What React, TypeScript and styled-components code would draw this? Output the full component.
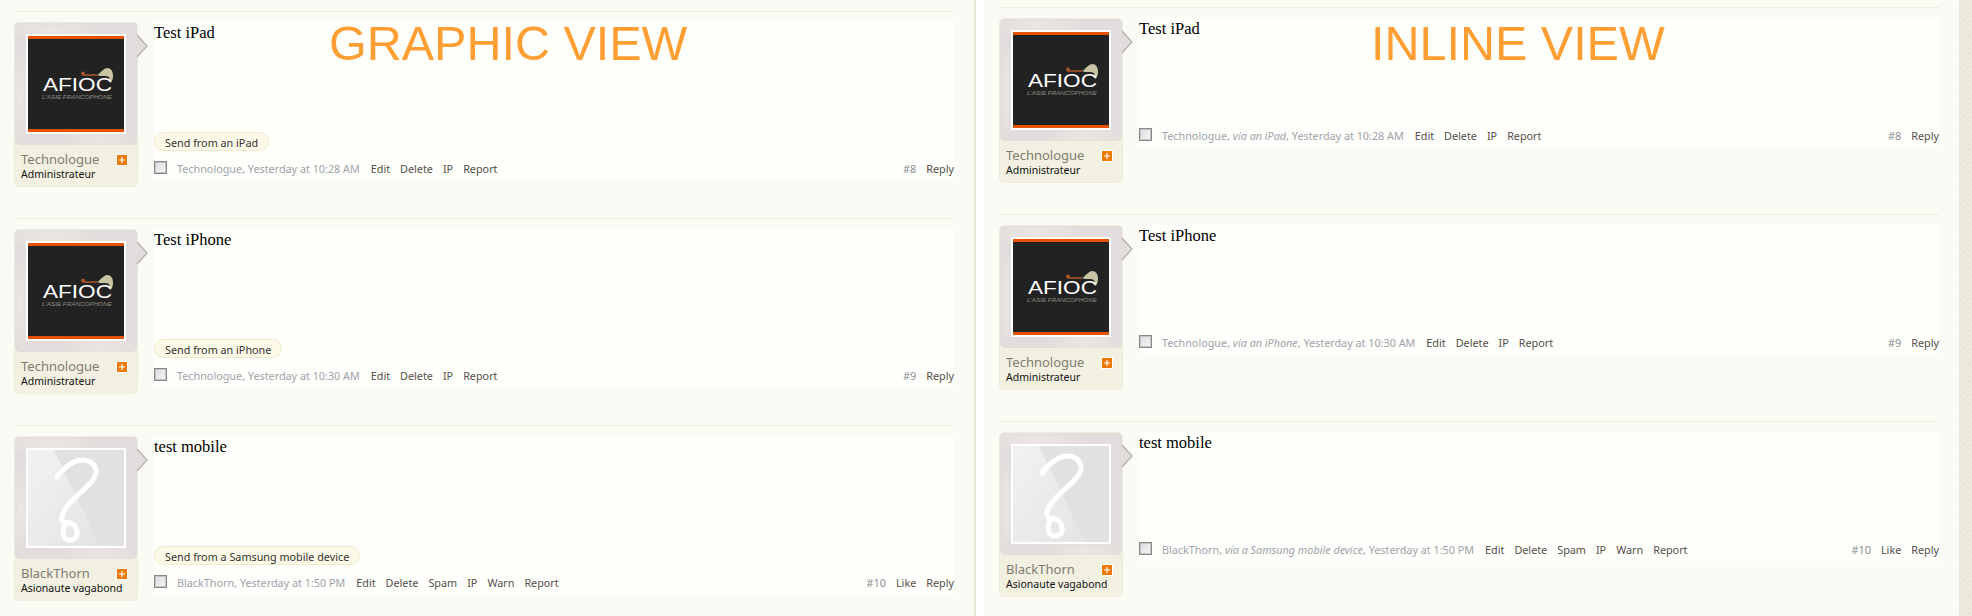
import styled, { createGlobalStyle } from "styled-components";

type PostData = {
    id: number;
    title: string;
    author: string;
    role: string;
    device: string;
    time: string;
    avatar: "afioc" | "unknown";
    links: string[];
    rightLinks: string[];
};

const POSTS: PostData[] = [
    {
        id: 8,
        title: "Test iPad",
        author: "Technologue",
        role: "Administrateur",
        device: "an iPad",
        time: "Yesterday at 10:28 AM",
        avatar: "afioc",
        links: ["Edit", "Delete", "IP", "Report"],
        rightLinks: ["Reply"],
    },
    {
        id: 9,
        title: "Test iPhone",
        author: "Technologue",
        role: "Administrateur",
        device: "an iPhone",
        time: "Yesterday at 10:30 AM",
        avatar: "afioc",
        links: ["Edit", "Delete", "IP", "Report"],
        rightLinks: ["Reply"],
    },
    {
        id: 10,
        title: "test mobile",
        author: "BlackThorn",
        role: "Asionaute vagabond",
        device: "a Samsung mobile device",
        time: "Yesterday at 1:50 PM",
        avatar: "unknown",
        links: ["Edit", "Delete", "Spam", "IP", "Warn", "Report"],
        rightLinks: ["Like", "Reply"],
    },
];

const GlobalStyle = createGlobalStyle`
    html, body {
        margin: 0;
        padding: 0;
        background: #fbfbf5;
    }
`;

const Page = styled.div`
    display: flex;
    width: 1972px;
    height: 616px;
    overflow: hidden;
    font-family: "Noto Sans", sans-serif;
    background: #fbfbf5;
`;

const Panel = styled.section<{ $top: number; $left: number; $width: number }>`
    position: relative;
    box-sizing: border-box;
    width: ${(p) => p.$width}px;
    padding: ${(p) => p.$top}px 20px 0 ${(p) => p.$left}px;
    flex-shrink: 0;
`;

const Gutter = styled.div`
    box-sizing: border-box;
    width: 10px;
    flex-shrink: 0;
    background: #fff;
    border-left: 2px solid #ebe8d8;
`;

const EdgeStripe = styled.div`
    flex: 1;
    background: repeating-linear-gradient(45deg, #e9e6d6 0 2px, #eeebdd 2px 4px);
`;

const ViewLabel = styled.h2<{ $left: number; $top: number }>`
    position: absolute;
    left: ${(p) => p.$left}px;
    top: ${(p) => p.$top}px;
    margin: 0;
    font-family: "Liberation Sans", Arial, sans-serif;
    font-size: 48.5px;
    font-weight: 400;
    line-height: 56px;
    color: #ff9f33;
    white-space: nowrap;
`;

const PostRow = styled.article`
    display: flex;
    box-sizing: border-box;
    height: 207px;
    padding-top: 10px;
    border-top: 1px solid #ecedda;
`;

const UserCard = styled.div`
    position: relative;
    display: flex;
    flex-direction: column;
    box-sizing: border-box;
    width: 124px;
    height: 165px;
    margin-right: 16px;
    flex-shrink: 0;
    border: 1px solid #efecdc;
    border-radius: 5px;
    background: linear-gradient(#edebd8, #f3f1e2);
`;

const AvatarArea = styled.div`
    box-sizing: border-box;
    height: 122px;
    padding: 11px;
    border-radius: 4px 4px 5px 5px;
    background:
        radial-gradient(ellipse 50px 12px at 30% 6%, #ebe6e4, transparent),
        radial-gradient(ellipse 40px 10px at 70% 96%, #ebe6e4, transparent),
        radial-gradient(ellipse 9px 50px at 5% 60%, #ebe6e4, transparent),
        #e3dcdc;
`;

const AvatarFrame = styled.div`
    box-sizing: border-box;
    width: 100px;
    height: 100px;
    border: 2px solid #fff;
    background: #fff;
`;

const ArrowMark = styled.svg`
    position: absolute;
    top: 11px;
    left: 121px;
    width: 12px;
    height: 24px;
`;

const UserInfo = styled.div`
    position: relative;
    padding: 6px 6px 0;
`;

const UserName = styled.div`
    font-size: 13px;
    line-height: 16px;
    color: #7f7d72;
`;

const UserRole = styled.div`
    font-size: 10.5px;
    line-height: 14px;
    color: #111;
`;

const PlusBadge = styled.svg`
    position: absolute;
    top: 9px;
    right: 9px;
    width: 12px;
    height: 12px;
`;

const Message = styled.div<{ $inline: boolean }>`
    display: flex;
    flex: 1;
    flex-direction: column;
    box-sizing: border-box;
    height: ${(p) => (p.$inline ? 129 : 158)}px;
    padding-top: 2px;
    background: #fefefb;
`;

const Title = styled.div`
    font-family: "Liberation Serif", "Times New Roman", serif;
    font-size: 16.5px;
    line-height: 18px;
    color: #000;
`;

const DevicePill = styled.span`
    align-self: flex-start;
    box-sizing: border-box;
    height: 19px;
    margin-top: auto;
    padding: 0 10px;
    border: 1px solid #efeacb;
    border-radius: 10px;
    background: #fdf9e9;
    font-size: 10.8px;
    line-height: 19px;
    color: #333;
`;

const Actions = styled.div<{ $inline: boolean }>`
    display: flex;
    align-items: center;
    height: 13px;
    margin-top: ${(p) => (p.$inline ? "auto" : "10px")};
    margin-bottom: 6px;
    font-size: 10.8px;
    line-height: 13px;
    white-space: nowrap;
`;

const CheckBox = styled.span`
    box-sizing: border-box;
    width: 13px;
    height: 13px;
    margin-right: 10px;
    border: 1px solid #888;
    box-shadow: inset 0 0 0 1px #c4c4c4;
    background: linear-gradient(135deg, #dcdce2, #f7f7f7);
`;

const Meta = styled.span`
    margin-right: 11px;
    padding-top: 1px;
    color: #9fa3aa;
`;

const Device = styled.em`
    font-style: italic;
`;

const LinkGroup = styled.div<{ $end?: boolean }>`
    display: flex;
    gap: 10px;
    padding-top: 1px;
    margin-left: ${(p) => (p.$end ? "auto" : "0")};
`;

const ActionLink = styled.a`
    color: #54504a;
`;

const PostNumber = styled.span`
    color: #8a8f96;
`;

const AfiocLogo = () => (
    <svg width="96" height="96" viewBox="0 0 96 96">
        <rect width="96" height="96" fill="#222222" />
        <rect width="96" height="3" fill="#e65100" />
        <rect y="93" width="96" height="3" fill="#e65100" />
        <path
            d="M69 39c3-1 5-6 10-7 4 0 6 3 6 8 0 3-1 6-3 7-1-2 0-4-1-6-3-2-8 0-12-2z"
            fill="#c9c5a4"
        />
        <path d="M55 39h14" stroke="#a8552a" strokeWidth="1.6" />
        <circle cx="55" cy="37.5" r="2" fill="#a8552a" />
        <text
            x="15"
            y="55"
            fontFamily="Liberation Sans, sans-serif"
            fontSize="18"
            fill="#fff"
            textLength="69"
            lengthAdjust="spacingAndGlyphs"
        >
            AFIOC
        </text>
        <text
            x="14"
            y="63"
            fontFamily="Liberation Sans, sans-serif"
            fontSize="5.5"
            fontStyle="italic"
            fill="#8e8d80"
            textLength="70"
            lengthAdjust="spacingAndGlyphs"
        >
            L'ASIE FRANCOPHONE
        </text>
    </svg>
);

const UnknownAvatar = () => (
    <svg width="96" height="96" viewBox="0 0 96 96">
        <defs>
            <linearGradient id="shine" x1="0" y1="0" x2="1" y2="1">
                <stop offset="0" stopColor="#f2f2f2" />
                <stop offset="1" stopColor="#e4e4e6" />
            </linearGradient>
        </defs>
        <rect width="96" height="96" fill="#e1e1e4" />
        <path d="M0 0h26l46 96H0z" fill="url(#shine)" />
        <path
            d="M29 27C34 20 40 15 46 12C54 8 66 10 68 20C69 28 60 36 52 43C44 50 36 58 34 66C33 71 36 73 39 73C45 72 50 78 49 85C48 90 41 92 37 88C34 84 35 77 38 73"
            fill="none"
            stroke="#fff"
            strokeWidth="5"
            strokeLinecap="round"
            strokeLinejoin="round"
        />
    </svg>
);

const Post = ({ post, inline }: { post: PostData; inline: boolean }) => (
    <PostRow>
        <UserCard>
            <AvatarArea>
                <AvatarFrame>
                    {post.avatar === "afioc" ? <AfiocLogo /> : <UnknownAvatar />}
                </AvatarFrame>
            </AvatarArea>
            <ArrowMark viewBox="0 0 12 24">
                <path d="M1 1l10 11L1 23z" fill="#e3dcdc" />
                <path d="M1 1l10 11L1 23" fill="none" stroke="#b5aea8" strokeWidth="1.2" />
            </ArrowMark>
            <UserInfo>
                <UserName>{post.author}</UserName>
                <UserRole>{post.role}</UserRole>
                <PlusBadge viewBox="0 0 12 12">
                    <rect x="0.5" y="0.5" width="11" height="11" fill="#ee7a06" stroke="#fff" />
                    <path d="M6 3v6M3 6h6" stroke="#fff" strokeWidth="1.2" />
                </PlusBadge>
            </UserInfo>
        </UserCard>
        <Message $inline={inline}>
            <Title>{post.title}</Title>
            {!inline && <DevicePill>Send from {post.device}</DevicePill>}
            <Actions $inline={inline}>
                <CheckBox />
                <Meta>
                    {post.author},{" "}
                    {inline && (
                        <>
                            <Device>via {post.device}</Device>,{" "}
                        </>
                    )}
                    {post.time}
                </Meta>
                <LinkGroup>
                    {post.links.map((link) => (
                        <ActionLink key={link}>{link}</ActionLink>
                    ))}
                </LinkGroup>
                <LinkGroup $end>
                    <PostNumber>#{post.id}</PostNumber>
                    {post.rightLinks.map((link) => (
                        <ActionLink key={link}>{link}</ActionLink>
                    ))}
                </LinkGroup>
            </Actions>
        </Message>
    </PostRow>
);

const App = () => {
    return (
        <Page>
            <GlobalStyle />
            <Panel $top={11} $left={14} $width={974}>
                <ViewLabel $left={329} $top={15}>
                    GRAPHIC VIEW
                </ViewLabel>
                {POSTS.map((post) => (
                    <Post key={post.id} post={post} inline={false} />
                ))}
            </Panel>
            <Gutter />
            <Panel $top={7} $left={15} $width={975}>
                <ViewLabel $left={387} $top={15}>
                    INLINE VIEW
                </ViewLabel>
                {POSTS.map((post) => (
                    <Post key={post.id} post={post} inline />
                ))}
            </Panel>
            <EdgeStripe />
        </Page>
    );
};

export default App;
